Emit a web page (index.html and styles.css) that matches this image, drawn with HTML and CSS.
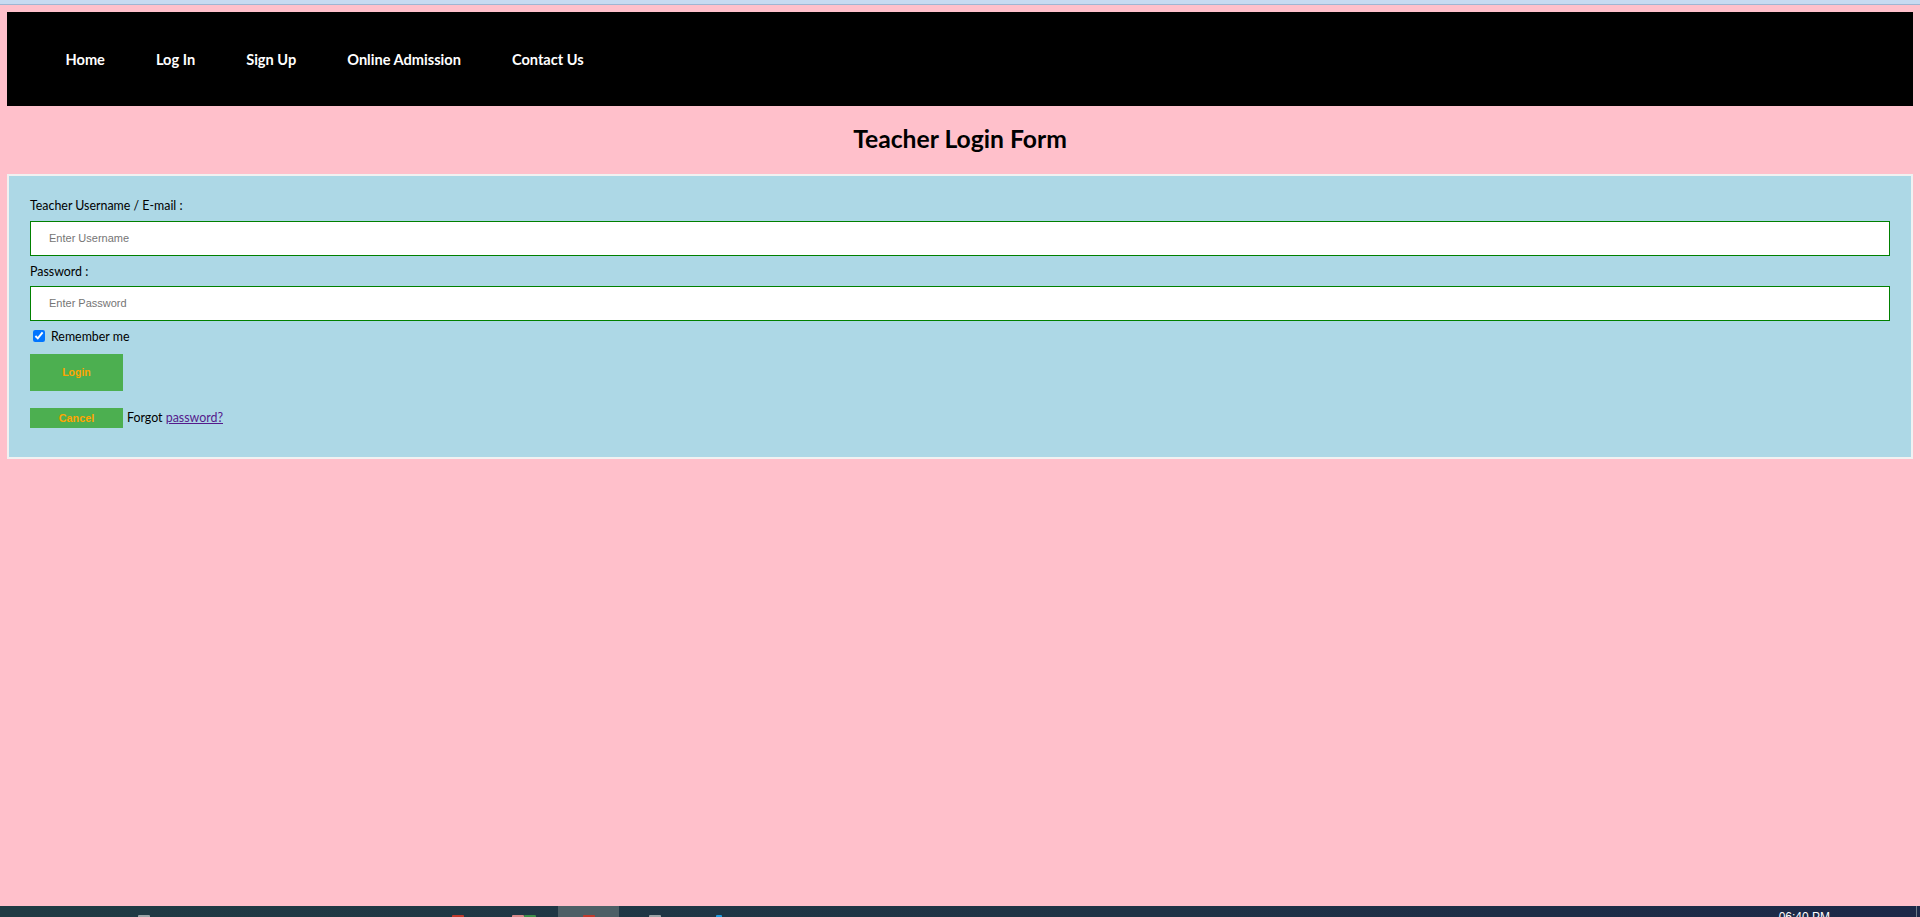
FILE: index.html
```
<!DOCTYPE html>
<html lang="en">
<head>
<meta charset="utf-8">
<title>Teacher Login Form</title>
<link rel="stylesheet" href="styles.css">
</head>
<body>
<div class="chrome-strip"></div>
<div class="page">
  <nav class="topnav">
    <a class="nav-link" href="#">Home</a>
    <a class="nav-link" href="#">Log In</a>
    <a class="nav-link" href="#">Sign Up</a>
    <a class="nav-link" href="#">Online Admission</a>
    <a class="nav-link" href="#">Contact Us</a>
  </nav>

  <h2 class="form-title">Teacher Login Form</h2>

  <form class="login-panel">
    <label class="field-label" for="uname">Teacher Username / E-mail :</label>
    <input class="text-input" id="uname" type="text" placeholder="Enter Username">

    <label class="field-label field-label-next" for="pwd">Password :</label>
    <input class="text-input" id="pwd" type="password" placeholder="Enter Password">

    <div class="remember-row">
      <input class="remember-box" type="checkbox" checked>
      <span>Remember me</span>
    </div>

    <button class="btn btn-login" type="button">Login</button>

    <div class="cancel-row">
      <button class="btn btn-cancel" type="button">Cancel</button>
      <span class="forgot">Forgot <a class="forgot-link" href="#">password?</a></span>
    </div>
  </form>
</div>

<div class="taskbar">
  <span class="tb-icon tb-grey tb-i1"></span>
  <span class="tb-icon tb-red tb-i2"></span>
  <span class="tb-icon tb-pink tb-i3"></span>
  <span class="tb-icon tb-green tb-i4"></span>
  <span class="tb-active"><span class="tb-icon tb-red"></span></span>
  <span class="tb-icon tb-grey tb-i5"></span>
  <span class="tb-icon tb-blue tb-i6"></span>
  <span class="tb-clock">06:40 PM</span>
  <span class="tb-edge"></span>
</div>
</body>
</html>
```

FILE: styles.css
```
html, body {
  margin: 0;
  padding: 0;
}

body {
  background: #ffc0cb;
  font-family: Lato, "Open Sans", Arial, sans-serif;
  height: 917px;
  overflow: hidden;
}

.chrome-strip {
  height: 4px;
  background: #c7daf1;
  border-bottom: 1px solid #9fb6d3;
}

.page {
  padding: 7px 7px 0 7px;
}

/* navigation */
.topnav {
  height: 94px;
  background: #000;
  display: flex;
  align-items: center;
  padding-left: 33px;
}

.nav-link {
  color: #fff;
  text-decoration: none;
  font-weight: 700;
  font-size: 14.6px;
  padding: 0 25.5px;
}

/* title */
.form-title {
  margin: 19px 0 20px 0;
  text-align: center;
  font-size: 24.7px;
  line-height: 28.8px;
  font-weight: 700;
  color: #000;
}

/* panel */
.login-panel {
  margin: 0;
  background: #add8e6;
  border: 2px solid #f1f1f1;
  padding: 22px 21px 29px 21px;
  font-size: 12.4px;
  color: #000;
}

.field-label {
  display: block;
  line-height: 15px;
  margin-bottom: 8px;
}

.field-label-next {
  margin-top: 8px;
  margin-bottom: 7px;
}

.text-input {
  display: block;
  box-sizing: border-box;
  width: 100%;
  height: 35px;
  margin: 0;
  border: 1px solid #008000;
  background: #fff;
  padding: 0 18px;
  font-family: "Liberation Sans", Arial, sans-serif;
  font-size: 11px;
  outline: none;
}

.text-input::placeholder {
  color: #757575;
}

.remember-row {
  display: flex;
  align-items: center;
  height: 15px;
  margin-top: 8px;
}

.remember-box {
  width: 12px;
  height: 12px;
  margin: 0 6px 0 3px;
  accent-color: #0075ff;
}

.btn {
  display: block;
  box-sizing: border-box;
  width: 93px;
  border: none;
  margin: 0;
  padding: 0;
  background: #4caf50;
  color: #ffa500;
  font-family: "Liberation Sans", Arial, sans-serif;
  font-weight: 700;
  font-size: 10.5px;
  cursor: pointer;
}

.btn-login {
  height: 37px;
  margin-top: 10px;
}

.cancel-row {
  display: flex;
  align-items: center;
  margin-top: 17px;
  height: 20px;
}

.btn-cancel {
  height: 20px;
  font-size: 10.8px;
}

.forgot {
  margin-left: 4px;
  line-height: 15px;
}

.forgot-link {
  color: #551a8b;
}

/* taskbar */
.taskbar {
  position: fixed;
  left: 0;
  right: 0;
  bottom: 0;
  height: 11px;
  overflow: hidden;
  background: linear-gradient(90deg, #203b44 0%, #1f3346 60%, #1d2848 100%);
  display: flex;
  align-items: flex-start;
}

.tb-icon {
  display: block;
  width: 12px;
  height: 3px;
  margin-top: 9px;
  border-radius: 1px 1px 0 0;
}

.tb-grey { background: #9aa3a6; }
.tb-red { background: #c0392b; }
.tb-pink { background: #d98a8a; }
.tb-green { background: #3d8f4a; }
.tb-blue { background: #1e9be0; width: 6px; }

.tb-i1 { margin-left: 138px; }
.tb-i2 { margin-left: 302px; }
.tb-i3 { margin-left: 48px; }
.tb-i4 { margin-left: 0; }
.tb-i5 { margin-left: 30px; }
.tb-i6 { margin-left: 55px; }

.tb-active {
  display: flex;
  justify-content: center;
  width: 61px;
  height: 11px;
  margin-left: 22px;
  background: #4d5f66;
}

.tb-clock {
  margin-left: auto;
  margin-right: 86px;
  margin-top: 4px;
  color: #fff;
  font-family: "Liberation Sans", Arial, sans-serif;
  font-size: 12px;
  line-height: 14px;
}

.tb-edge {
  width: 1px;
  height: 11px;
  margin-right: 3px;
  background: #6f7c8a;
}
```
